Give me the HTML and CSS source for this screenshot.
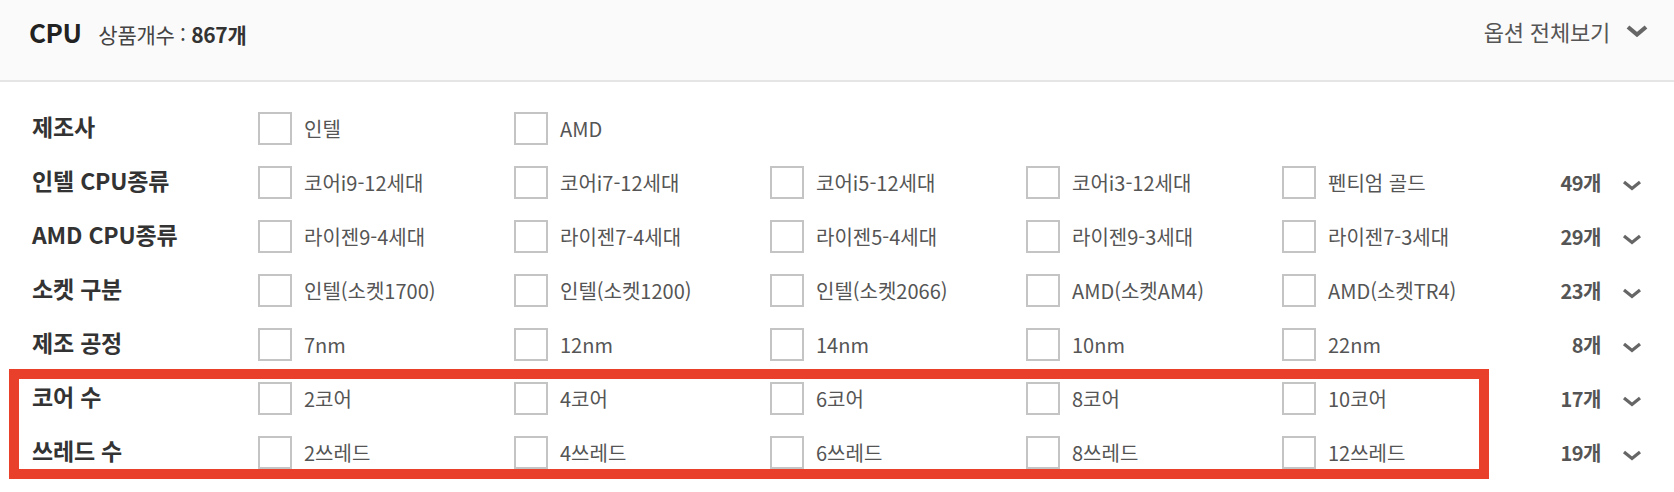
FILE: index.html
```html
<!DOCTYPE html>
<html lang="ko">
<head>
<meta charset="utf-8">
<title>CPU</title>
<link rel="stylesheet" href="styles.css">
</head>
<body>
<div class="panel">
  <header class="head">
    <div class="head-left">
      <span class="title">CPU</span>
      <span class="total">상품개수 : <b>867개</b></span>
    </div>
    <div class="head-right">
      <span>옵션 전체보기</span>
      <svg class="chev-big" width="22" height="12" viewBox="0 0 22 12"><path d="M2 2 L11 9.5 L20 2" fill="none" stroke="#666" stroke-width="4.2"/></svg>
    </div>
  </header>
  <div class="rows">
    <div class="row">
      <div class="label">제조사</div>
      <label class="opt"><span class="box"></span>인텔</label>
      <label class="opt"><span class="box"></span>AMD</label>
    </div>
    <div class="row">
      <div class="label">인텔 CPU종류</div>
      <label class="opt"><span class="box"></span>코어i9-12세대</label>
      <label class="opt"><span class="box"></span>코어i7-12세대</label>
      <label class="opt"><span class="box"></span>코어i5-12세대</label>
      <label class="opt"><span class="box"></span>코어i3-12세대</label>
      <label class="opt"><span class="box"></span>펜티엄 골드</label>
      <div class="more"><span class="cnt">49개</span><svg class="chev" width="20" height="12" viewBox="0 0 20 12"><path d="M2 3 L10 9.5 L18 3" fill="none" stroke="#666" stroke-width="3.2"/></svg></div>
    </div>
    <div class="row">
      <div class="label">AMD CPU종류</div>
      <label class="opt"><span class="box"></span>라이젠9-4세대</label>
      <label class="opt"><span class="box"></span>라이젠7-4세대</label>
      <label class="opt"><span class="box"></span>라이젠5-4세대</label>
      <label class="opt"><span class="box"></span>라이젠9-3세대</label>
      <label class="opt"><span class="box"></span>라이젠7-3세대</label>
      <div class="more"><span class="cnt">29개</span><svg class="chev" width="20" height="12" viewBox="0 0 20 12"><path d="M2 3 L10 9.5 L18 3" fill="none" stroke="#666" stroke-width="3.2"/></svg></div>
    </div>
    <div class="row">
      <div class="label">소켓 구분</div>
      <label class="opt"><span class="box"></span>인텔(소켓1700)</label>
      <label class="opt"><span class="box"></span>인텔(소켓1200)</label>
      <label class="opt"><span class="box"></span>인텔(소켓2066)</label>
      <label class="opt"><span class="box"></span>AMD(소켓AM4)</label>
      <label class="opt"><span class="box"></span>AMD(소켓TR4)</label>
      <div class="more"><span class="cnt">23개</span><svg class="chev" width="20" height="12" viewBox="0 0 20 12"><path d="M2 3 L10 9.5 L18 3" fill="none" stroke="#666" stroke-width="3.2"/></svg></div>
    </div>
    <div class="row">
      <div class="label">제조 공정</div>
      <label class="opt"><span class="box"></span>7nm</label>
      <label class="opt"><span class="box"></span>12nm</label>
      <label class="opt"><span class="box"></span>14nm</label>
      <label class="opt"><span class="box"></span>10nm</label>
      <label class="opt"><span class="box"></span>22nm</label>
      <div class="more"><span class="cnt">8개</span><svg class="chev" width="20" height="12" viewBox="0 0 20 12"><path d="M2 3 L10 9.5 L18 3" fill="none" stroke="#666" stroke-width="3.2"/></svg></div>
    </div>
    <div class="row">
      <div class="label">코어 수</div>
      <label class="opt"><span class="box"></span>2코어</label>
      <label class="opt"><span class="box"></span>4코어</label>
      <label class="opt"><span class="box"></span>6코어</label>
      <label class="opt"><span class="box"></span>8코어</label>
      <label class="opt"><span class="box"></span>10코어</label>
      <div class="more"><span class="cnt">17개</span><svg class="chev" width="20" height="12" viewBox="0 0 20 12"><path d="M2 3 L10 9.5 L18 3" fill="none" stroke="#666" stroke-width="3.2"/></svg></div>
    </div>
    <div class="row">
      <div class="label">쓰레드 수</div>
      <label class="opt"><span class="box"></span>2쓰레드</label>
      <label class="opt"><span class="box"></span>4쓰레드</label>
      <label class="opt"><span class="box"></span>6쓰레드</label>
      <label class="opt"><span class="box"></span>8쓰레드</label>
      <label class="opt"><span class="box"></span>12쓰레드</label>
      <div class="more"><span class="cnt">19개</span><svg class="chev" width="20" height="12" viewBox="0 0 20 12"><path d="M2 3 L10 9.5 L18 3" fill="none" stroke="#666" stroke-width="3.2"/></svg></div>
    </div>
  </div>
  <div class="highlight"></div>
</div>
</body>
</html>
```

FILE: styles.css
```css
* { box-sizing: border-box; }
html, body { margin: 0; padding: 0; background: #fff; }
body {
  font-family: "Noto Sans CJK KR", "Noto Sans", sans-serif;
  color: #333;
}
.panel { position: relative; width: 1674px; height: 492px; overflow: hidden; }
.head {
  height: 82px;
  background: #fafafa;
  border-bottom: 2px solid #e5e5e5;
  display: flex;
  align-items: center;
  justify-content: space-between;
  padding: 0 26px 18px 29px;
}
.head-left { display: flex; align-items: baseline; gap: 17px; }
.title { font-size: 26px; font-weight: 700; color: #222; letter-spacing: -0.5px; }
.total { font-size: 21px; color: #444; letter-spacing: -0.3px; }
.total b { font-weight: 700; color: #333; }
.head-right { display: flex; align-items: center; gap: 16px; font-size: 22px; color: #555; letter-spacing: -0.2px; }
.chev-big { display: block; }
.rows { padding-top: 20px; }
.row {
  height: 54px;
  display: grid;
  grid-template-columns: 226px repeat(5, 256px) 1fr;
  padding-left: 32px;
  padding-right: 32px;
  align-items: start;
}
.label {
  font-size: 23px;
  font-weight: 700;
  color: #333;
  line-height: 30px;
  padding-top: 9px;
  letter-spacing: -0.2px;
}
.opt {
  display: flex;
  align-items: center;
  gap: 12px;
  height: 33px;
  margin-top: 10px;
  font-size: 20px;
  color: #555;
  letter-spacing: 0;
}
.box {
  width: 34px;
  height: 33px;
  border: 2px solid #c4c4c4;
  background: #fff;
  flex: none;
}
.more {
  grid-column: 7;
  display: flex;
  justify-content: flex-end;
  align-items: center;
  gap: 21px;
  height: 33px;
  margin-top: 10px;
  font-size: 20px;
  font-weight: 700;
  color: #555;
}
.cnt { letter-spacing: -0.5px; }
.chev { display: block; margin-top: 4px; }
.highlight {
  position: absolute;
  left: 9px;
  top: 369px;
  width: 1480px;
  height: 110px;
  border: 10px solid #e8402a;
}
```
